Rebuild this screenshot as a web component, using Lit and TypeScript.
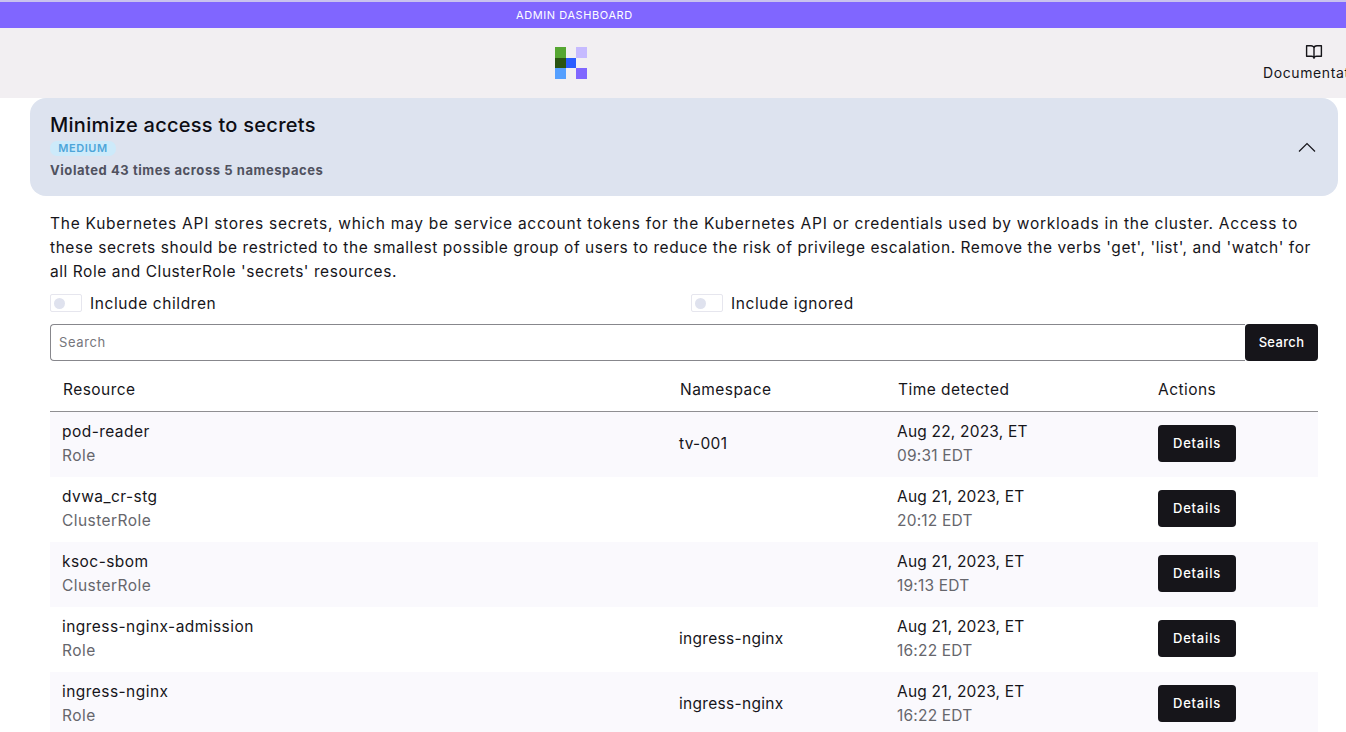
import { LitElement, html, css } from "lit";
import { customElement } from "lit/decorators.js";

const rows = [
  ["pod-reader", "Role", "tv-001", "Aug 22, 2023, ET", "09:31 EDT"],
  ["dvwa_cr-stg", "ClusterRole", "", "Aug 21, 2023, ET", "20:12 EDT"],
  ["ksoc-sbom", "ClusterRole", "", "Aug 21, 2023, ET", "19:13 EDT"],
  ["ingress-nginx-admission", "Role", "ingress-nginx", "Aug 21, 2023, ET", "16:22 EDT"],
  ["ingress-nginx", "Role", "ingress-nginx", "Aug 21, 2023, ET", "16:22 EDT"],
];

@customElement("app-root")
export class AppRoot extends LitElement {
  static styles = css`
    :host { display: block; width: 1346px; height: 732px; overflow: hidden; background: #fff; color: #16151a; font-family: "Inter", "Liberation Sans", sans-serif; }
    * { box-sizing: border-box; }
    .banner { height: 28px; border-top: 2px solid #c9c2ee; background: #8066ff; color: #fff; font-size: 11px; letter-spacing: .58px; line-height: 26px; display: flex; padding-left: 516px; }
    .header { height: 70px; background: #f2eff2; display: grid; grid-template-columns: 555px 32px 1fr; align-items: center; position: relative; }
    .logo { grid-column: 2; display: block; }
    .doc { position: absolute; left: 1263px; top: 16px; width: 110px; font-size: 14px; letter-spacing: .6px; white-space: nowrap; display: flex; flex-direction: column; gap: 4px; }
    .doc svg { margin-left: 42px; display: block; }
    .panel { margin: 0 8px 0 30px; height: 98px; background: #dde3ef; border-radius: 16px; padding: 14px 20px 18px; display: flex; align-items: center; justify-content: space-between; }
    .title { font-size: 20px; line-height: 24px; font-weight: 500; letter-spacing: .27px; color: #0d0d14; margin: 1px 0 4px; }
    .pill { display: block; width: 66px; height: 15px; line-height: 15px; background: #cdeafa; border-radius: 7px; text-align: center; color: #4da5d9; font-size: 11px; font-weight: 600; letter-spacing: .55px; }
    .sub { font-size: 13px; line-height: 16px; font-weight: 700; letter-spacing: .56px; color: #50525f; margin-top: 6px; }
    .chev { margin: 4px 2px 0 0; display: block; }
    .main { padding: 16px 28px 0 50px; }
    .desc { margin: 0; font-size: 15.5px; line-height: 24px; letter-spacing: .555px; color: #16151a; white-space: nowrap; }
    .first { letter-spacing: .745px; }
    .toggles { display: grid; grid-template-columns: 641px 1fr; margin-top: 7px; height: 24px; }
    .toggle { display: flex; align-items: center; gap: 8px; font-size: 15.5px; letter-spacing: .6px; }
    .sw { width: 32px; height: 18px; border: 1px solid #e6e6ee; border-radius: 2px; padding: 3px 0 0 3px; }
    .knob { display: block; width: 11px; height: 11px; border-radius: 50%; background: #dfe2ee; }
    .search { display: flex; margin-top: 9px; height: 37px; }
    .input { flex: 1; border: 1px solid #87878c; border-right: 0; border-radius: 4px 0 0 4px; padding: 0 8px; font-size: 13px; letter-spacing: .6px; line-height: 35px; color: #76767c; }
    .btn { background: #16151a; color: #fff; border-radius: 4px; font-size: 13px; font-weight: 500; display: flex; align-items: center; justify-content: center; padding-bottom: 1px; }
    .sbtn { width: 73px; letter-spacing: .35px; }
    .row { display: grid; grid-template-columns: 617px 218px 261px 1fr; padding-left: 12px; align-items: center; }
    .head { height: 51px; border-bottom: 1px solid #8f8f92; font-size: 15.5px; letter-spacing: .45px; padding: 7px 0 0 13px; grid-template-columns: 617px 218px 260px 1fr; }
    .item { height: 65px; font-size: 15.5px; padding-bottom: 2px; }
    .item:nth-child(even) { background: #faf9fd; }
    .item .btn { width: 78px; height: 37px; letter-spacing: .8px; }
    .cell { letter-spacing: .45px; }
    .ns { letter-spacing: .3px; }
    .time { letter-spacing: .2px; }
    .l1 { line-height: 24px; }
    .l2 { line-height: 24px; color: #66666c; }
  `;

  render() {
    return html`
      <div class="banner">ADMIN DASHBOARD</div>
      <div class="header">
        <svg class="logo" width="32" height="32" viewBox="0 0 32 32" aria-hidden="true">
          <rect x="0" y="0" width="11" height="11" fill="#56a632"/>
          <rect x="21" y="0" width="11" height="11" fill="#c6baff"/>
          <rect x="0" y="11" width="11" height="10" fill="#2a5412"/>
          <rect x="11" y="11" width="10" height="10" fill="#2b5cff"/>
          <rect x="0" y="21" width="11" height="11" fill="#559fff"/>
          <rect x="21" y="21" width="11" height="11" fill="#8066ff"/>
        </svg>
        <div class="doc">
          <svg width="18" height="16" viewBox="0 0 18 16" fill="none" stroke="#16151a" stroke-width="1.4" stroke-linejoin="round" aria-hidden="true">
            <path d="M9 4.2C9 3 7.8 1.8 6 1.8H1.6V12.2H6.4C7.9 12.2 9 13 9 14.2C9 13 10.1 12.2 11.6 12.2H16.4V1.8H12C10.2 1.8 9 3 9 4.2ZM9 4.2V14.2"/>
          </svg>
          <span>Documentation</span>
        </div>
      </div>
      <div class="panel">
        <div>
          <div class="title">Minimize access to secrets</div>
          <span class="pill">MEDIUM</span>
          <div class="sub">Violated 43 times across 5 namespaces</div>
        </div>
        <svg class="chev" width="18" height="10" viewBox="0 0 18 10" fill="none" stroke="#16151a" stroke-width="1.2" aria-hidden="true"><path d="M1 9.5L9 1.5L17 9.5"/></svg>
      </div>
      <div class="main">
        <p class="desc"><span class="first">The Kubernetes API stores secrets, which may be service account tokens for the Kubernetes API or credentials used by workloads in the cluster. Access to</span><br />these secrets should be restricted to the smallest possible group of users to reduce the risk of privilege escalation. Remove the verbs 'get', 'list', and 'watch' for<br />all Role and ClusterRole 'secrets' resources.</p>
        <div class="toggles">
          <div class="toggle"><span class="sw"><span class="knob"></span></span>Include children</div>
          <div class="toggle"><span class="sw"><span class="knob"></span></span>Include ignored</div>
        </div>
        <div class="search"><div class="input">Search</div><div class="btn sbtn">Search</div></div>
        <div class="table">
          <div class="row head"><span>Resource</span><span>Namespace</span><span>Time detected</span><span>Actions</span></div>
          ${rows.map((r) => html`
            <div class="row item">
              <div class="cell"><div class="l1">${r[0]}</div><div class="l2">${r[1]}</div></div>
              <div class="ns">${r[2]}</div>
              <div class="time"><div class="l1">${r[3]}</div><div class="l2">${r[4]}</div></div>
              <div class="btn">Details</div>
            </div>`)}
        </div>
      </div>
    `;
  }
}
